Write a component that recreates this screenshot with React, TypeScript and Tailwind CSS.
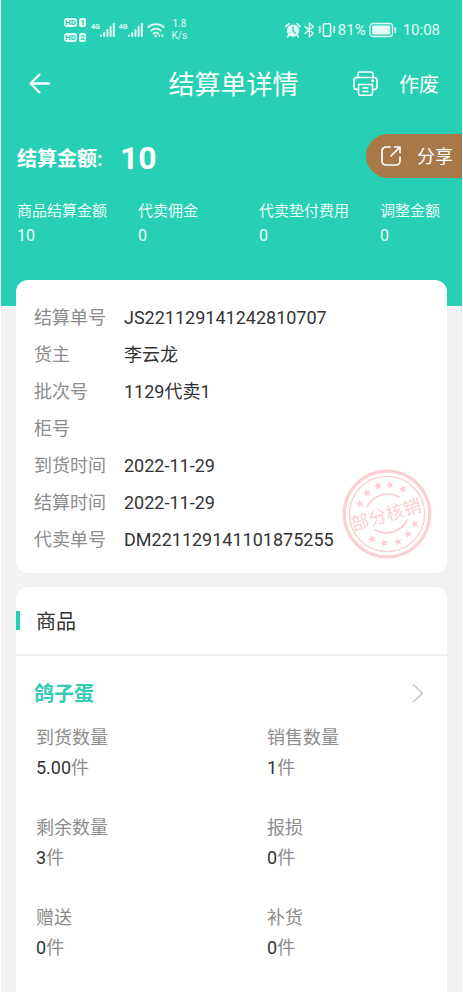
import { ReactNode } from 'react';

const summary = [
  { label: '商品结算金额', value: '10' },
  { label: '代卖佣金', value: '0' },
  { label: '代卖垫付费用', value: '0' },
  { label: '调整金额', value: '0' },
];

const details = [
  { label: '结算单号', value: 'JS221129141242810707' },
  { label: '货主', value: '李云龙' },
  { label: '批次号', value: '1129代卖1' },
  { label: '柜号', value: '' },
  { label: '到货时间', value: '2022-11-29' },
  { label: '结算时间', value: '2022-11-29' },
  { label: '代卖单号', value: 'DM221129141101875255' },
];

const quantities = [
  { label: '到货数量', value: '5.00' },
  { label: '销售数量', value: '1' },
  { label: '剩余数量', value: '3' },
  { label: '报损', value: '0' },
  { label: '赠送', value: '0' },
  { label: '补货', value: '0' },
];

const stars = [
  [18, 35], [25, 24], [36, 17], [48, 16], [61, 20],
  [30, 70], [42, 74], [56, 73], [66, 65], [73, 55],
];

function SimBadge({ n }: { n: string }) {
  return (
    <div className="flex gap-[2px] text-[8px] font-bold leading-[9px] text-[#27cfb5]">
      <span className="w-[13px] rounded-[3px] bg-[#e4faf6] text-center">HD</span>
      <span className="w-[7px] rounded-[2px] bg-[#e4faf6] text-center">{n}</span>
    </div>
  );
}

function Signal() {
  return (
    <div className="flex">
      <span className="text-[7px] font-bold leading-[10px]">4G</span>
      <svg width="16" height="16" viewBox="0 0 16 16" fill="currentColor">
        <rect x="0" y="12.5" width="2" height="2.5" rx="1" />
        <rect x="3.2" y="10" width="2" height="5" rx="1" />
        <rect x="6.4" y="7" width="2" height="8" rx="1" />
        <rect x="9.6" y="4" width="2" height="11" rx="1" />
        <rect x="12.8" y="1" width="2" height="14" rx="1" />
      </svg>
    </div>
  );
}

function StatusBar() {
  return (
    <div className="flex h-14 items-center justify-between pt-1 pr-[22px] pl-[63px] text-[#e4faf6]">
      <div className="flex items-center gap-[3px]">
        <div className="mr-[2px] flex flex-col gap-[6px]">
          <SimBadge n="1" />
          <SimBadge n="2" />
        </div>
        <Signal />
        <Signal />
        <svg width="18" height="16" viewBox="0 0 18 16" fill="none" stroke="currentColor" strokeWidth="1.8" strokeLinecap="round">
          <path d="M1.2 5.2a11.5 11.5 0 0 1 15.6 0" />
          <path d="M4 8.6a7.4 7.4 0 0 1 10 0" />
          <path d="M6.6 11.7a3.6 3.6 0 0 1 4.6-.2" />
          <circle cx="8.6" cy="14" r="1.2" fill="currentColor" stroke="none" />
          <path d="M13 11.8l-2 1.9 2 1.9zM14.6 11.8l2 1.9-2 1.9z" fill="currentColor" stroke="none" />
        </svg>
        <div className="ml-1 text-center text-[10px] leading-3">
          <div>1.8</div>
          <div>K/s</div>
        </div>
      </div>
      <div className="flex items-center text-[15px] leading-5">
        <svg width="16" height="16" viewBox="0 0 16 16" fill="none">
          <circle cx="8" cy="8.6" r="6.2" fill="currentColor" />
          <path d="M1 4.4L4 1.6M15 4.4L12 1.6M3.8 13.2L2.6 14.8M12.2 13.2l1.2 1.6" stroke="currentColor" strokeWidth="1.6" strokeLinecap="round" />
          <path d="M8 5v4l2.2 2" stroke="#27cfb5" strokeWidth="1.4" strokeLinecap="round" />
        </svg>
        <svg className="ml-[3px]" width="11" height="16" viewBox="0 0 11 16" fill="none" stroke="currentColor" strokeWidth="1.4" strokeLinejoin="round" strokeLinecap="round">
          <path d="M1 4.6l8.4 6.6-4 3.8V1l4 3.8L1 11.4" />
        </svg>
        <svg className="ml-[3px]" width="18" height="16" viewBox="0 0 18 16" fill="none" stroke="currentColor" strokeWidth="1.6">
          <rect x="5.4" y="1.8" width="7.2" height="12.4" rx="1.5" />
          <path d="M2.4 4L1.2 5.4l1.2 1.4-1.2 1.4 1.2 1.4-1.2 1.4M15.6 4l1.2 1.4-1.2 1.4 1.2 1.4-1.2 1.4 1.2 1.4" strokeWidth="1.3" />
        </svg>
        <span className="mr-[3px] ml-[2px]">81%</span>
        <svg width="28" height="16" viewBox="0 0 28 16" fill="none">
          <rect x="1" y="1.5" width="22.5" height="13" rx="3" stroke="currentColor" strokeWidth="1.3" />
          <rect x="3.2" y="3.6" width="18" height="8.8" rx="1" fill="currentColor" />
          <rect x="25.4" y="5" width="1.6" height="6" rx=".8" fill="currentColor" />
        </svg>
        <span className="ml-[6px]">10:08</span>
      </div>
    </div>
  );
}

function Stamp() {
  return (
    <svg className="absolute right-[15px] bottom-[14px]" width="90" height="90" viewBox="0 0 90 90" fill="none" stroke="#fccfd3">
      <circle cx="45" cy="45" r="42.8" strokeWidth="3.2" />
      <circle cx="45" cy="45" r="37.6" strokeWidth="1.4" />
      <path d="M25 38A23 23 0 0 1 57 28M33 61A23 23 0 0 0 65 51" strokeWidth="1.8" strokeLinecap="round" />
      {stars.map(([x, y]) => (
        <path
          key={`${x}-${y}`}
          d="M0-4.4L1.1-1.4 4.2-1.4 1.7.6 2.6 3.6 0 1.8-2.6 3.6-1.7.6-4.2-1.4-1.1-1.4z"
          fill="#fccfd3"
          stroke="none"
          transform={`translate(${x} ${y}) rotate(-16)`}
        />
      ))}
      <text x="44" y="52" textAnchor="middle" fontSize="18" fill="#fccfd3" stroke="none" transform="rotate(-16 45 45)">
        部分核销
      </text>
    </svg>
  );
}

function Card({ className, children }: { className: string; children: ReactNode }) {
  return <section className={`relative mx-[15px] bg-white ${className}`}>{children}</section>;
}

export default function SettlementDetailPage() {
  return (
    <div className="flex min-h-screen flex-col border-x border-white bg-[#f2f2f2] font-['Roboto','Noto_Sans_CJK_SC',sans-serif] text-[#333333]">
      <header className="bg-[#27cfb5] pb-[58px] text-white">
        <StatusBar />
        <nav className="grid h-14 grid-cols-[1fr_auto_1fr] items-center pr-[23px] pl-[27px]">
          <button type="button" aria-label="返回" className="w-6">
            <svg width="24" height="24" viewBox="0 0 24 24" fill="none" stroke="currentColor" strokeWidth="2.4" strokeLinecap="round" strokeLinejoin="round">
              <path d="M21 11.5H3M11.5 2.5l-8.900 9 8.900 9" />
            </svg>
          </button>
          <h1 className="pt-[2px] text-[26px] leading-9">结算单详情</h1>
          <div className="flex items-center justify-end gap-[21px]">
            <button type="button" aria-label="打印">
              <svg width="25" height="26" viewBox="0 0 25 26" fill="none" stroke="currentColor" strokeWidth="1.6" strokeLinecap="round" strokeLinejoin="round">
                <path d="M5 6.5V3a2 2 0 0 1 2-2h11a2 2 0 0 1 2 2v3.5" />
                <path d="M5.5 18.5H3.8A2.8 2.8 0 0 1 1 15.7V9.3a2.8 2.8 0 0 1 2.8-2.8h17.4A2.8 2.8 0 0 1 24 9.3v6.4a2.8 2.8 0 0 1-2.8 2.8h-1.7" />
                <path d="M5.5 13.5h14v8.7a2 2 0 0 1-2 2h-10a2 2 0 0 1-2-2z" />
                <path d="M10 17h5M10 20.5h5" />
                <circle cx="19.8" cy="9.8" r=".7" fill="currentColor" />
              </svg>
            </button>
            <button type="button" className="pt-[2px] text-xl">作废</button>
          </div>
        </nav>

        <div className="mt-5 flex h-12 items-center justify-between pl-4">
          <p className="flex items-center pt-1 font-bold">
            <span className="w-[103px] pt-[2px] text-xl">结算金额:</span>
            <span className="text-[32px] leading-9">10</span>
          </p>
          <button type="button" className="flex h-11 items-center gap-4 rounded-l-full bg-[#a87848] pr-[9px] pl-[15px] text-lg">
            <svg width="20" height="20" viewBox="0 0 20 20" fill="none" stroke="currentColor" strokeWidth="1.7" strokeLinecap="round" strokeLinejoin="round">
              <path d="M9 1H5a4 4 0 0 0-4 4v10a4 4 0 0 0 4 4h10a4 4 0 0 0 4-4v-4" />
              <path d="M10 10L18.8 1.2M13.5 1H19v5.5" />
            </svg>
            <span className="pt-[2px]">分享</span>
          </button>
        </div>

        <dl className="mt-[19px] grid grid-cols-[1fr_1fr_1fr_auto] pr-[22px] pl-4 text-[15px] leading-[25px] text-[#e9fbf8]">
          {summary.map((item) => (
            <div key={item.label}>
              <dt>{item.label}</dt>
              <dd className="text-base leading-6">{item.value}</dd>
            </div>
          ))}
        </dl>
      </header>

      <Card className="-mt-[26px] rounded-xl pt-[19px] pb-[15px]">
        <Stamp />
        <dl className="relative px-[18px] text-lg">
          {details.map((row) => (
            <div key={row.label} className="flex h-[37px] items-center">
              <dt className="w-[90px] text-[#8c8c8c]">{row.label}</dt>
              <dd>{row.value}</dd>
            </div>
          ))}
        </dl>
      </Card>

      <Card className="mt-[14px] flex-1 rounded-t-xl pb-7">
        <div className="flex h-[69px] items-center border-b-2 border-[#f2f2f2]">
          <span className="h-[19px] w-1 bg-[#27cfb5]" />
          <h2 className="ml-4 pt-[2px] text-xl">商品</h2>
        </div>
        <a href="#goods" className="flex h-[67px] items-center justify-between pt-2 pr-[23px] pl-[18px] text-xl font-bold text-[#36cbb3]">
          鸽子蛋
          <svg width="12" height="20" viewBox="0 0 12 20" fill="none" stroke="#c4c4c4" strokeWidth="1.5" strokeLinecap="round" strokeLinejoin="round">
            <path d="M1.5 .8L10.500 9.300l-9 8.500" />
          </svg>
        </a>
        <dl className="grid grid-cols-[1fr_160px] gap-y-[30px] pr-5 pl-5 text-lg leading-[30px]">
          {quantities.map((q) => (
            <div key={q.label}>
              <dt className="text-[#8c8c8c]">{q.label}</dt>
              <dd>
                {q.value}
                <span className="text-[#8c8c8c]">件</span>
              </dd>
            </div>
          ))}
        </dl>
      </Card>
    </div>
  );
}
